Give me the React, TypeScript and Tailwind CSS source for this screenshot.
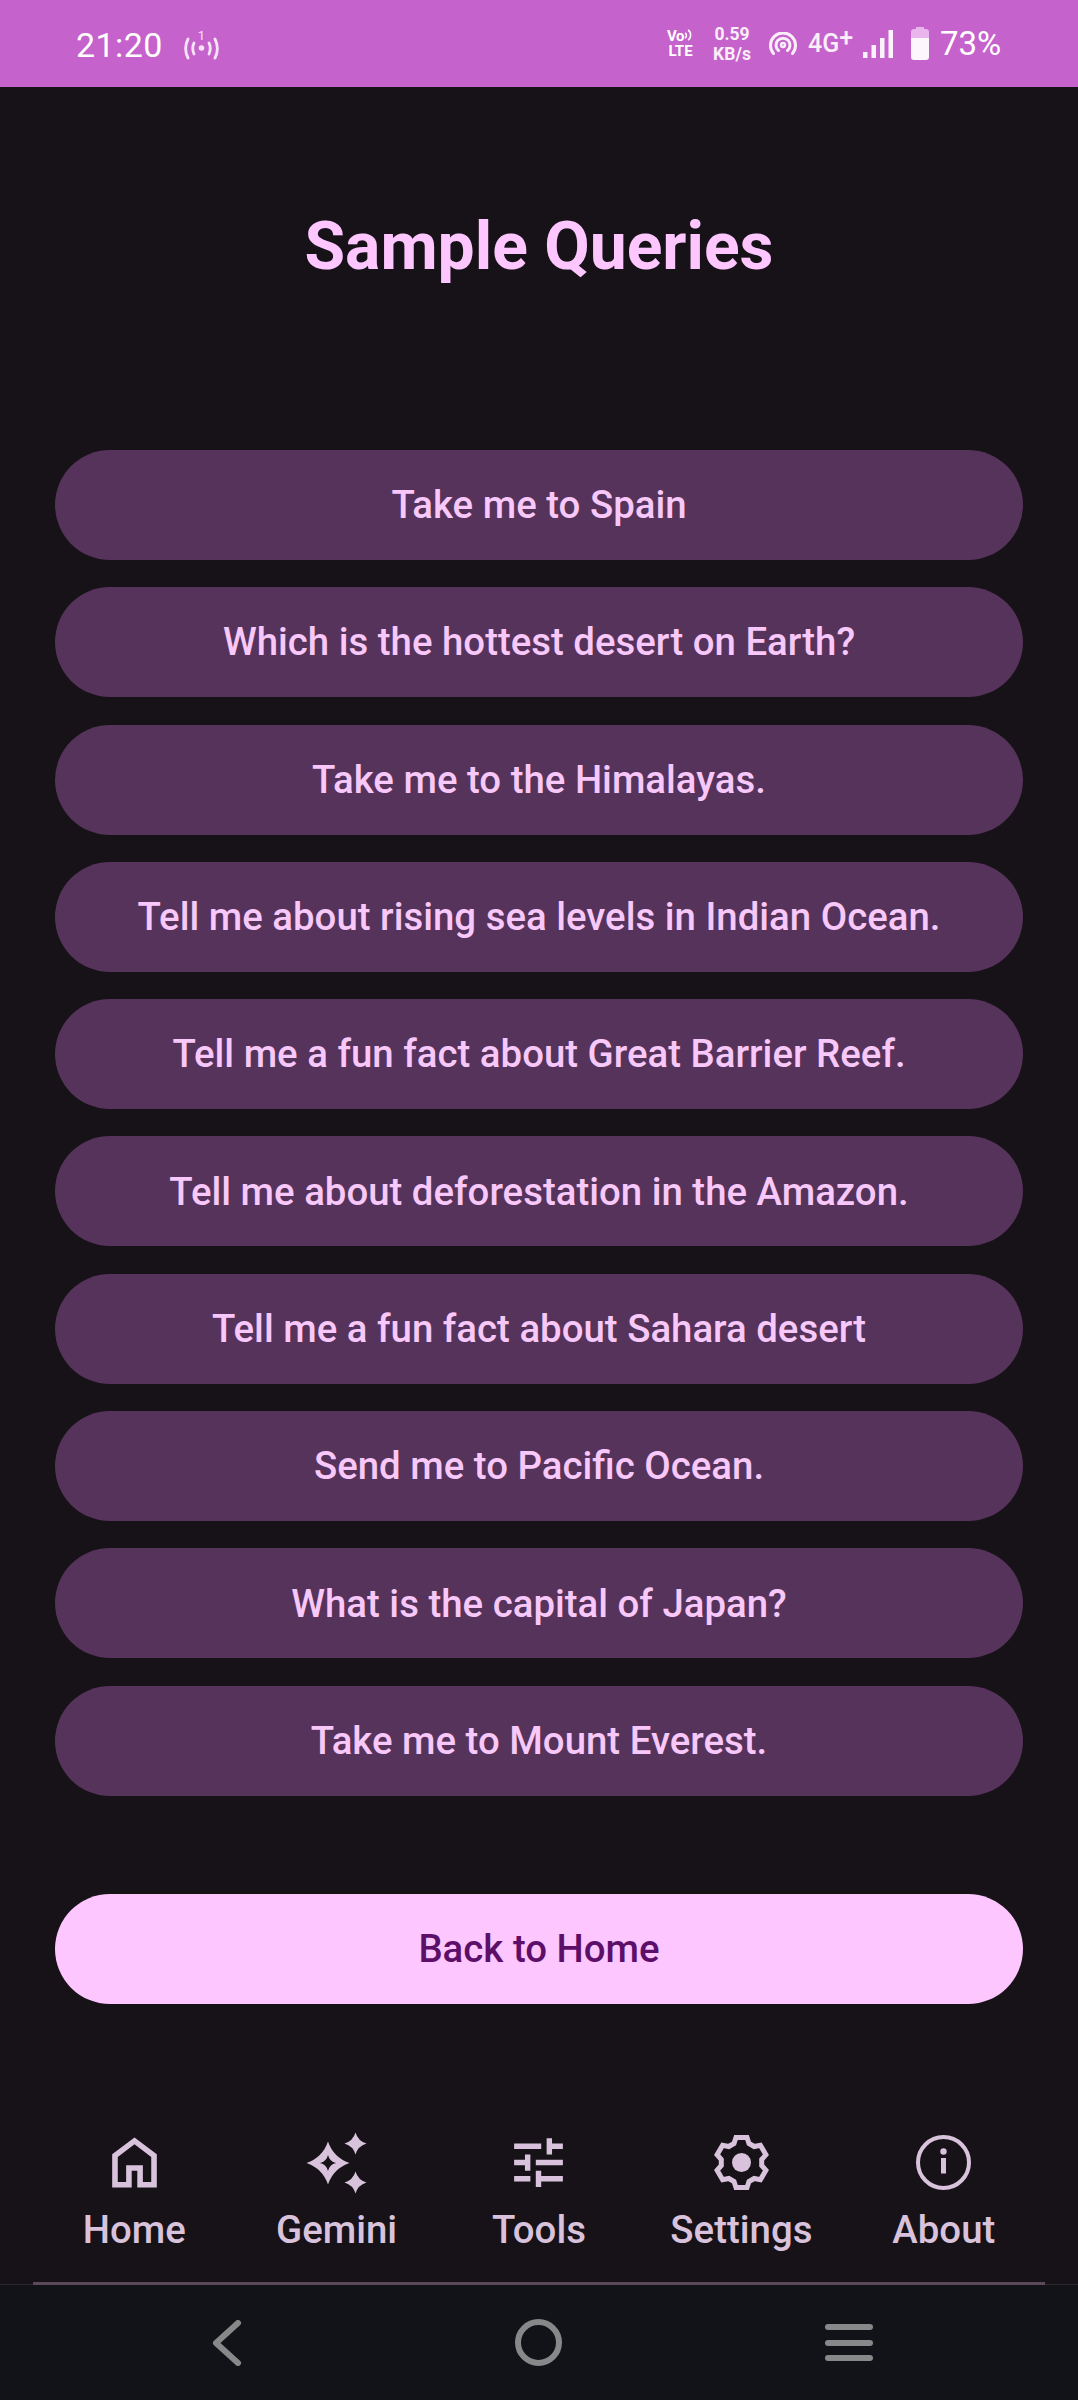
const queries = [
  "Take me to Spain",
  "Which is the hottest desert on Earth?",
  "Take me to the Himalayas.",
  "Tell me about rising sea levels in Indian Ocean.",
  "Tell me a fun fact about Great Barrier Reef.",
  "Tell me about deforestation in the Amazon.",
  "Tell me a fun fact about Sahara desert",
  "Send me to Pacific Ocean.",
  "What is the capital of Japan?",
  "Take me to Mount Everest.",
];

function StatusBar() {
  return (
    <div className="h-[87px] shrink-0 bg-[#c562cb] flex items-center justify-between pl-[76px] pr-[78px] text-white">
      <div className="flex items-center">
        <span className="text-[34px] leading-none tracking-[0.4px] pt-[2px]">21:20</span>
        <svg viewBox="0 0 36 32" className="w-[36px] h-[32px] ml-[20px] mt-[2px]" fill="none" stroke="#f7e4f8" strokeWidth="2.8" strokeLinecap="round">
          <path d="M5 10c-3 6-3 13 0 19" />
          <path d="M11 14c-1.800 3.500-1.800 7 0 11" />
          <path d="M32 10c3 6 3 13 0 19" />
          <path d="M26 14c1.800 3.500 1.800 7 0 11" />
          <circle cx="18.500" cy="19" r="2.800" fill="#f7e4f8" stroke="none" />
          <text x="18.500" y="11" textAnchor="middle" fontSize="13" fill="#f7e4f8" stroke="none">1</text>
        </svg>
      </div>
      <div className="flex items-center">
        <div className="w-[27px] flex flex-col items-center text-[15px] font-bold leading-[15px]">
          <div className="flex items-center">
            <span className="tracking-[-0.5px]">Vo</span>
            <svg viewBox="0 0 10 14" className="w-[10px] h-[14px] -mt-[3px]" fill="none" stroke="white" strokeWidth="1.500">
              <path d="M1 10c2-1 2-4 0-5" />
              <path d="M4 12c3.500-2 3.500-8 0-10" />
            </svg>
          </div>
          <span>LTE</span>
        </div>
        <div className="w-[40px] ml-[18px] flex flex-col items-center text-[17.500px] font-bold leading-[20px] text-[#fbeefb]">
          <span>0.59</span>
          <span>KB/s</span>
        </div>
        <svg viewBox="0 0 30 24" className="w-[30px] h-[24px] ml-[16px]" fill="none" stroke="#fbeefb" strokeWidth="3" strokeLinecap="round">
          <path d="M5.500 21.500a12.500 12.500 0 1 1 19 0" />
          <path d="M10.500 18.500a7 7 0 1 1 9 0" />
          <circle cx="15" cy="13" r="2" strokeWidth="2.400" />
        </svg>
        <span className="text-[25px] font-medium leading-none ml-[10px] w-[45px] flex text-[#fbeefb]">
          4G<span className="-mt-[6px]">+</span>
        </span>
        <svg viewBox="0 0 30 28" className="w-[30px] h-[28px] ml-[10px]" fill="#fbf3fb">
          <rect x="0" y="22" width="4.500" height="6" />
          <rect x="8.500" y="15" width="4.500" height="13" />
          <rect x="17" y="8" width="4.500" height="20" />
          <rect x="25.500" y="0" width="4.500" height="28" />
        </svg>
        <svg viewBox="0 0 18 33" className="w-[18px] h-[33px] ml-[18px]">
          <path d="M5 0h8v2h2a3 3 0 0 1 3 3v6H0V5a3 3 0 0 1 3-3h2z" fill="#e9b5ec" />
          <path d="M0 11h18v19a3 3 0 0 1-3 3H3a3 3 0 0 1-3-3z" fill="#fdf6fd" />
        </svg>
        <span className="text-[33px] leading-none ml-[11px] w-[60px]">73%</span>
      </div>
    </div>
  );
}

function HomeIcon() {
  return (
    <svg viewBox="0 0 24 24" className="w-[65px] h-[65px] scale-[1.03]" fill="currentColor">
      <path d="M6 19h3v-6h6v6h3v-9l-6-4.500L6 10v9Zm-2 2V9l8-6 8 6v12h-7v-6h-2v6H4Z" />
    </svg>
  );
}

// four point star, hole is cut out through evenodd on the big one
function star(cx: number, cy: number, r: number, c: number) {
  return `M${cx} ${cy - r}Q${cx + c} ${cy - c} ${cx + r} ${cy}Q${cx + c} ${cy + c} ${cx} ${cy + r}Q${cx - c} ${cy + c} ${cx - r} ${cy}Q${cx - c} ${cy - c} ${cx} ${cy - r}Z`;
}

function GeminiIcon() {
  return (
    <svg viewBox="0 0 65 65" className="w-[65px] h-[65px]" fill="currentColor">
      <path fillRule="evenodd" d={star(24, 33, 21.5, 5.5) + star(24, 33, 8, 1.5)} />
      <path d={star(51.5, 13.5, 11, 2.5)} />
      <path d={star(51.5, 52.5, 11, 2.5)} />
    </svg>
  );
}

function ToolsIcon() {
  return (
    <svg viewBox="0 0 24 24" className="w-[65px] h-[65px]" fill="currentColor">
      <path d="M11 21v-6h2v2h8v2h-8v2h-2ZM3 19v-2h6v2H3Zm4-4v-2H3v-2h4V9h2v6H7Zm4-2v-2h10v2H11Zm4-4V3h2v2h4v2h-4v2h-2ZM3 7V5h10v2H3Z" />
    </svg>
  );
}

function gearPath() {
  const pts: string[] = [];
  for (let k = 0; k < 6; k++) {
    const a = (k * Math.PI) / 3;
    const at = (r: number, t: number) => {
      const x = 32.5 + r * Math.sin(a) + t * Math.cos(a);
      const y = 32.5 - r * Math.cos(a) + t * Math.sin(a);
      return `${x.toFixed(2)} ${y.toFixed(2)}`;
    };
    pts.push(at(19, -7.5), at(25, -5.5), at(25, 5.5), at(19, 7.5));
  }
  return "M" + pts.join("L") + "Z";
}

function SettingsIcon() {
  return (
    <svg viewBox="0 0 65 65" className="w-[65px] h-[65px]" fill="none" stroke="currentColor">
      <path strokeWidth="5" strokeLinejoin="miter" d={gearPath()} />
      <circle cx="32.500" cy="32.500" r="9.500" fill="currentColor" stroke="none" />
    </svg>
  );
}

function AboutIcon() {
  return (
    <svg viewBox="0 0 65 65" className="w-[65px] h-[65px]" fill="none" stroke="currentColor">
      <circle cx="32.500" cy="32.500" r="25.500" strokeWidth="4" />
      <circle cx="32.500" cy="21.500" r="3.200" fill="currentColor" stroke="none" />
      <rect x="30" y="28" width="5" height="15.500" fill="currentColor" stroke="none" />
    </svg>
  );
}

const tabs = [
  { label: "Home", icon: <HomeIcon /> },
  { label: "Gemini", icon: <GeminiIcon /> },
  { label: "Tools", icon: <ToolsIcon /> },
  { label: "Settings", icon: <SettingsIcon /> },
  { label: "About", icon: <AboutIcon /> },
];

export default function App() {
  return (
    <div className="w-[1078px] h-[2400px] flex flex-col bg-[#171218] font-['Roboto',sans-serif] overflow-hidden">
      <StatusBar />

      <h1 className="mt-[122px] text-center text-[66px] leading-[76px] font-bold text-[#fdc6ff]">Sample Queries</h1>

      <div className="mt-[165px] px-[55px] flex flex-col gap-[27.300px]">
        {queries.map((q) => (
          <button key={q} className="h-[110px] rounded-full bg-[#56335a] text-[38.400px] font-medium text-[#f7c8f9]">
            {q}
          </button>
        ))}
      </div>

      <div className="mt-[98px] px-[55px]">
        <button className="w-full h-[110px] rounded-full bg-[#fdc6ff] text-[38.400px] font-medium text-[#5c0f69]">
          Back to Home
        </button>
      </div>

      {/* bottom tabs */}
      <div className="mt-auto mx-[33px] grid grid-cols-5 text-[#d9c3dc] pb-[32px]">
        {tabs.map((tab) => (
          <div key={tab.label} className="flex flex-col items-center">
            {tab.icon}
            <span className="text-[38.400px] leading-[45px] font-medium mt-[12px]">{tab.label}</span>
          </div>
        ))}
      </div>

      {/* android nav bar */}
      <div className="h-[116px] shrink-0 bg-[#111318] border-t border-[#2a2a2e] relative flex items-center justify-between pl-[195px] pr-[197px]">
        <div className="absolute -top-[3px] left-[33px] right-[33px] h-[3px] bg-[#5a4a5c]" />
        <div className="w-[64px] flex justify-center">
          <svg viewBox="0 0 32 46" className="w-[32px] h-[46px]" fill="none" stroke="#86888a" strokeWidth="6" strokeLinecap="round" strokeLinejoin="round">
            <path d="M27 3L5 23l22 20" />
          </svg>
        </div>
        <div className="w-[64px] flex justify-center">
          <div className="w-[47px] h-[47px] rounded-full border-[6px] border-[#86888a]" />
        </div>
        <div className="w-[64px] flex justify-center">
          <div className="w-[48px] h-[37px] flex flex-col justify-between">
            <div className="h-[6px] rounded-full bg-[#86888a]" />
            <div className="h-[6px] rounded-full bg-[#86888a]" />
            <div className="h-[6px] rounded-full bg-[#86888a]" />
          </div>
        </div>
      </div>
    </div>
  );
}
